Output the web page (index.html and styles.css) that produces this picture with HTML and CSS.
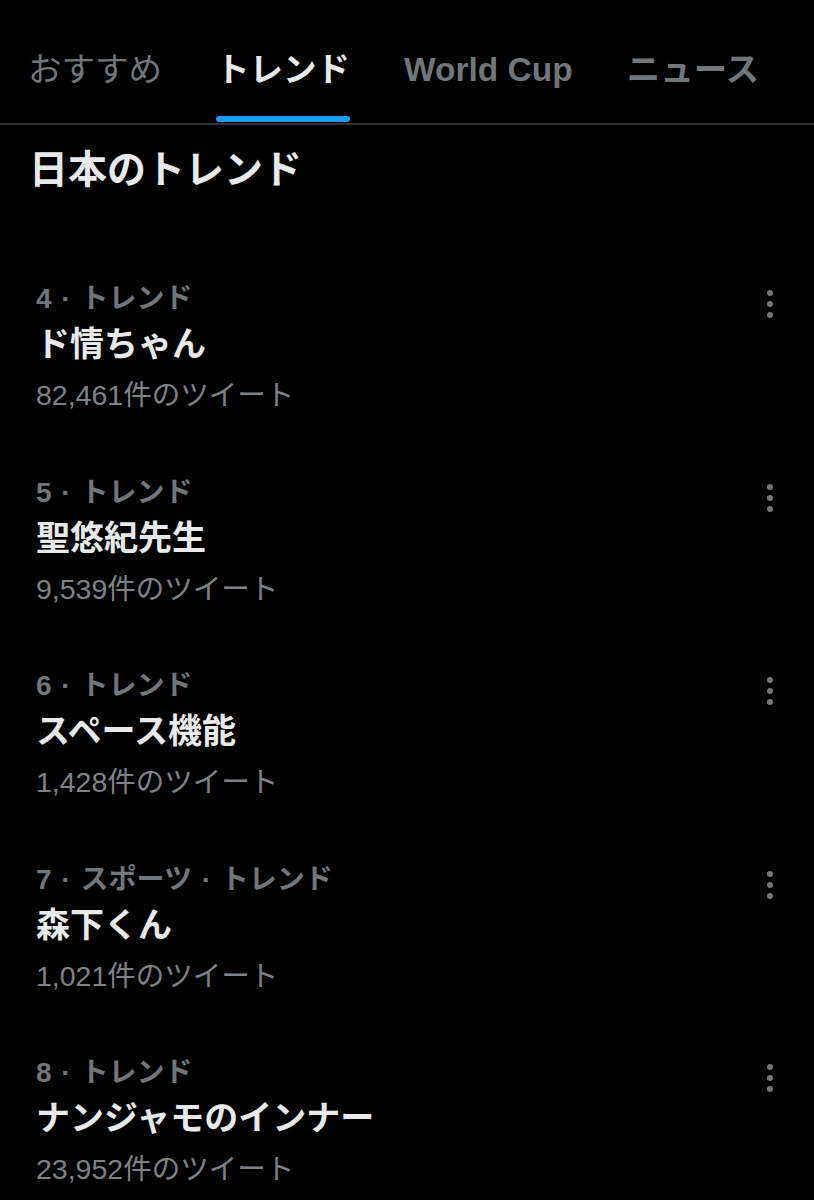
FILE: index.html
```html
<!DOCTYPE html>
<html lang="ja">
<head>
<meta charset="utf-8">
<link rel="stylesheet" href="styles.css">
</head>
<body>
<div class="page">
  <nav class="tabs">
    <div class="tab">おすすめ</div>
    <div class="tab active">トレンド<span class="indicator"></span></div>
    <div class="tab bold">World Cup</div>
    <div class="tab bold">ニュース</div>
  </nav>
  <h1 class="title">日本のトレンド</h1>
  <ul class="list">
    <li class="item">
      <div class="texts">
        <div class="meta">4 · トレンド</div>
        <div class="name">ド情ちゃん</div>
        <div class="count">82,461件のツイート</div>
      </div>
      <div class="more"><i></i><i></i><i></i></div>
    </li>
    <li class="item">
      <div class="texts">
        <div class="meta">5 · トレンド</div>
        <div class="name">聖悠紀先生</div>
        <div class="count">9,539件のツイート</div>
      </div>
      <div class="more"><i></i><i></i><i></i></div>
    </li>
    <li class="item">
      <div class="texts">
        <div class="meta">6 · トレンド</div>
        <div class="name">スペース機能</div>
        <div class="count">1,428件のツイート</div>
      </div>
      <div class="more"><i></i><i></i><i></i></div>
    </li>
    <li class="item">
      <div class="texts">
        <div class="meta">7 · スポーツ · トレンド</div>
        <div class="name">森下くん</div>
        <div class="count">1,021件のツイート</div>
      </div>
      <div class="more"><i></i><i></i><i></i></div>
    </li>
    <li class="item">
      <div class="texts">
        <div class="meta">8 · トレンド</div>
        <div class="name">ナンジャモのインナー</div>
        <div class="count">23,952件のツイート</div>
      </div>
      <div class="more"><i></i><i></i><i></i></div>
    </li>
  </ul>
</div>
</body>
</html>
```
FILE: styles.css
```css
* { box-sizing: border-box; }
html, body { margin: 0; padding: 0; background: #000; }
body {
  font-family: "Liberation Sans", "Noto Sans CJK JP", sans-serif;
  color: #e7e9ea;
  width: 814px;
  height: 1200px;
  overflow: hidden;
}
.page { display: flex; flex-direction: column; }
.tabs {
  display: flex;
  gap: 54px;
  padding: 0 0 0 28px;
  height: 125px;
  border-bottom: 2px solid #2f3336;
  align-items: flex-start;
}
.tab {
  position: relative;
  font-size: 33.5px;
  line-height: 40px;
  margin-top: 50px;
  color: #71767b;
  white-space: nowrap;
}
.tab.bold { font-weight: 700; }
.tab.active { color: #e7e9ea; font-weight: 700; }
.indicator {
  position: absolute;
  left: 0;
  right: 0;
  top: 66px;
  height: 6px;
  border-radius: 3px;
  background: #1d9bf0;
}
.title {
  margin: 0;
  padding: 20px 0 0 29px;
  font-size: 39px;
  line-height: 50px;
  font-weight: 700;
  color: #e7e9ea;
}
.list {
  list-style: none;
  margin: 0;
  padding: 0;
  margin-top: 84px;
}
.item {
  display: flex;
  justify-content: space-between;
  height: 193.5px;
  padding: 0 41px 0 36px;
}
.texts { display: flex; flex-direction: column; }
.meta {
  font-size: 28px;
  line-height: 40px;
  font-weight: 700;
  color: #71767b;
  word-spacing: 2px;
}
.name {
  font-size: 34px;
  line-height: 50px;
  font-weight: 700;
  color: #e7e9ea;
}
.count {
  font-size: 28.5px;
  line-height: 52px;
  color: #7e8287;
}
.more {
  display: flex;
  flex-direction: column;
  gap: 5px;
  padding-top: 11px;
}
.more i {
  display: block;
  width: 6px;
  height: 6px;
  border-radius: 50%;
  background: #71767b;
}
```
